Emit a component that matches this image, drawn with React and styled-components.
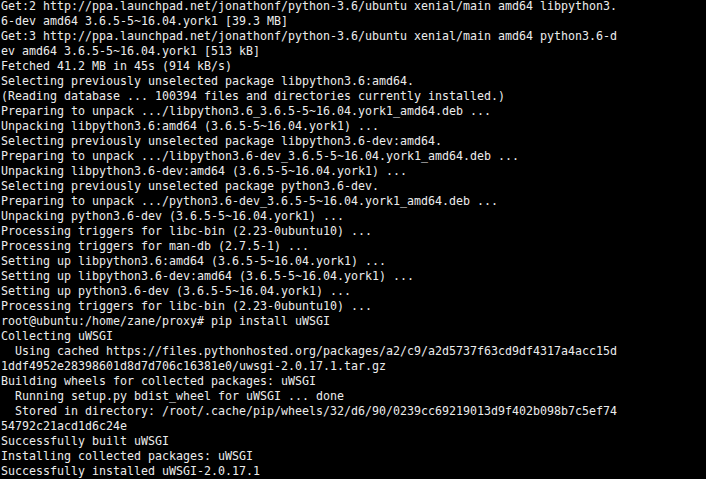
import styled, { createGlobalStyle } from "styled-components";

const GlobalStyle = createGlobalStyle`
  html, body {
    margin: 0;
    padding: 0;
    background: #000;
  }
`;

const Screen = styled.div`
  width: 706px;
  height: 479px;
  overflow: hidden;
  background-color: #000;
`;

const Output = styled.div`
  margin-top: -1px;
  padding-left: 1px;
  font-family: "DejaVu Sans Mono", "Liberation Mono", monospace;
  font-size: 11.63px;
  line-height: 15px;
  color: #ececec;
`;

const Line = styled.div`
  white-space: pre;
  height: 15px;
`;

const lines = [
  "Get:2 http://ppa.launchpad.net/jonathonf/python-3.6/ubuntu xenial/main amd64 libpython3.",
  "6-dev amd64 3.6.5-5~16.04.york1 [39.3 MB]",
  "Get:3 http://ppa.launchpad.net/jonathonf/python-3.6/ubuntu xenial/main amd64 python3.6-d",
  "ev amd64 3.6.5-5~16.04.york1 [513 kB]",
  "Fetched 41.2 MB in 45s (914 kB/s)",
  "Selecting previously unselected package libpython3.6:amd64.",
  "(Reading database ... 100394 files and directories currently installed.)",
  "Preparing to unpack .../libpython3.6_3.6.5-5~16.04.york1_amd64.deb ...",
  "Unpacking libpython3.6:amd64 (3.6.5-5~16.04.york1) ...",
  "Selecting previously unselected package libpython3.6-dev:amd64.",
  "Preparing to unpack .../libpython3.6-dev_3.6.5-5~16.04.york1_amd64.deb ...",
  "Unpacking libpython3.6-dev:amd64 (3.6.5-5~16.04.york1) ...",
  "Selecting previously unselected package python3.6-dev.",
  "Preparing to unpack .../python3.6-dev_3.6.5-5~16.04.york1_amd64.deb ...",
  "Unpacking python3.6-dev (3.6.5-5~16.04.york1) ...",
  "Processing triggers for libc-bin (2.23-0ubuntu10) ...",
  "Processing triggers for man-db (2.7.5-1) ...",
  "Setting up libpython3.6:amd64 (3.6.5-5~16.04.york1) ...",
  "Setting up libpython3.6-dev:amd64 (3.6.5-5~16.04.york1) ...",
  "Setting up python3.6-dev (3.6.5-5~16.04.york1) ...",
  "Processing triggers for libc-bin (2.23-0ubuntu10) ...",
  "root@ubuntu:/home/zane/proxy# pip install uWSGI",
  "Collecting uWSGI",
  "  Using cached https://files.pythonhosted.org/packages/a2/c9/a2d5737f63cd9df4317a4acc15d",
  "1ddf4952e28398601d8d7d706c16381e0/uwsgi-2.0.17.1.tar.gz",
  "Building wheels for collected packages: uWSGI",
  "  Running setup.py bdist_wheel for uWSGI ... done",
  "  Stored in directory: /root/.cache/pip/wheels/32/d6/90/0239cc69219013d9f402b098b7c5ef74",
  "54792c21acd1d6c24e",
  "Successfully built uWSGI",
  "Installing collected packages: uWSGI",
  "Successfully installed uWSGI-2.0.17.1",
];

export default function App() {
  return (
    <Screen>
      <GlobalStyle />
      <Output>
        {lines.map((text, i) => (
          <Line key={i}>{text}</Line>
        ))}
      </Output>
    </Screen>
  );
}
